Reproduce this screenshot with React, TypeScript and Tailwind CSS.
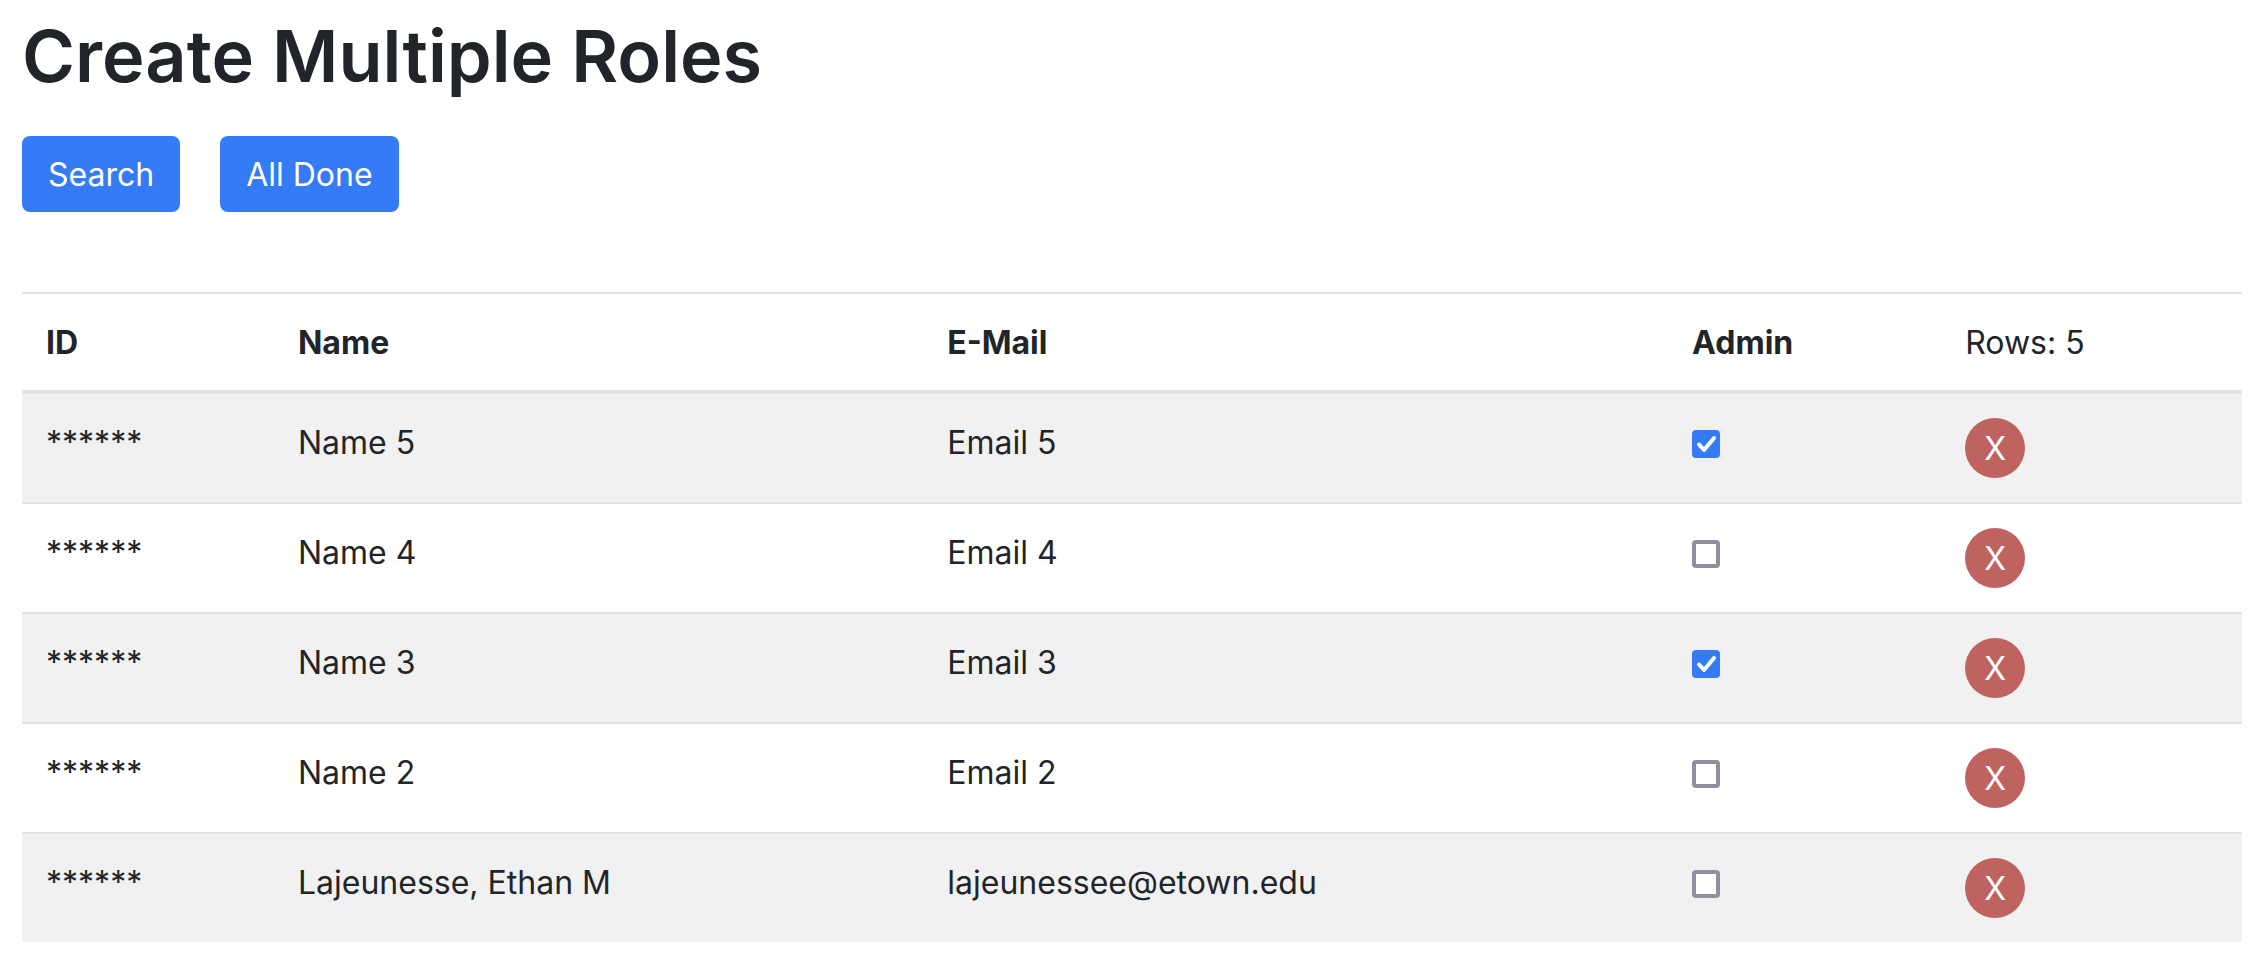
import { useState } from 'react';

type Role = { id: number; name: string; email: string; admin: boolean };

const initialRoles: Role[] = [
  { id: 5, name: 'Name 5', email: 'Email 5', admin: true },
  { id: 4, name: 'Name 4', email: 'Email 4', admin: false },
  { id: 3, name: 'Name 3', email: 'Email 3', admin: true },
  { id: 2, name: 'Name 2', email: 'Email 2', admin: false },
  { id: 1, name: 'Lajeunesse, Ethan M', email: 'lajeunessee@etown.edu', admin: false },
];

function AdminCheckbox({ label, checked, onChange }: { label: string; checked: boolean; onChange: () => void }) {
  return (
    <label className="grid size-7 cursor-pointer">
      <input
        type="checkbox"
        aria-label={label}
        checked={checked}
        onChange={onChange}
        className="col-start-1 row-start-1 size-7 appearance-none rounded-[4px] border-4 border-[#8f8f9d] bg-white checked:border-[#357af6] checked:bg-[#357af6]"
      />
      {checked && (
        <svg viewBox="0 0 28 28" className="pointer-events-none col-start-1 row-start-1 size-7" aria-hidden="true">
          <path d="M7 14.5L12 20L22 8" fill="none" stroke="#fff" strokeWidth="4" strokeLinecap="round" strokeLinejoin="round" />
        </svg>
      )}
    </label>
  );
}

const buttonClass = 'rounded-lg bg-[#357af6] px-[26px] pt-[15px] pb-[13px] text-[32px] leading-[48px] text-white';

export default function App() {
  const [roles, setRoles] = useState(initialRoles);

  const toggleAdmin = (id: number) =>
    setRoles(roles.map((role) => (role.id === id ? { ...role, admin: !role.admin } : role)));
  const remove = (id: number) => setRoles(roles.filter((role) => role.id !== id));

  return (
    <main className="bg-white pt-2 pr-5 pb-5 pl-[22px] font-[Inter,sans-serif] text-[32px] leading-[48px] text-[#212529]">
      <h1 className="text-[72px] leading-[96px] font-semibold">Create Multiple Roles</h1>
      <div className="mt-8 flex gap-10">
        <button type="button" className={buttonClass}>Search</button>
        <button type="button" className={buttonClass}>All Done</button>
      </div>
      <table className="mt-20 w-full table-fixed border-separate border-spacing-0 text-left">
        <colgroup>
          <col className="w-[11.35%]" />
          <col className="w-[29.25%]" />
          <col className="w-[33.55%]" />
          <col className="w-[12.3%]" />
          <col />
        </colgroup>
        <thead>
          <tr className="*:border-t-2 *:border-b-4 *:border-[#dee2e6] *:px-6 *:pt-[25px] *:pb-[23px]">
            <th scope="col" className="font-bold">ID</th>
            <th scope="col" className="font-bold">Name</th>
            <th scope="col" className="font-bold">E-Mail</th>
            <th scope="col" className="font-bold">Admin</th>
            <td>Rows: {roles.length}</td>
          </tr>
        </thead>
        <tbody>
          {roles.map((role) => (
            <tr
              key={role.id}
              className="align-top odd:bg-[#f1f1f1] *:border-b-2 *:border-[#dee2e6] *:px-6 last:*:border-b-0"
            >
              <td className="pt-[25px]">******</td>
              <td className="pt-[25px]">{role.name}</td>
              <td className="pt-[25px]">{role.email}</td>
              <td className="pt-9">
                <AdminCheckbox
                  label={`Admin: ${role.name}`}
                  checked={role.admin}
                  onChange={() => toggleAdmin(role.id)}
                />
              </td>
              <td className="py-6">
                <button
                  type="button"
                  aria-label={`Remove ${role.name}`}
                  onClick={() => remove(role.id)}
                  className="flex size-[60px] items-center justify-center rounded-full bg-[#bf6360] pt-0.5 text-[32px] text-white"
                >
                  X
                </button>
              </td>
            </tr>
          ))}
        </tbody>
      </table>
    </main>
  );
}
